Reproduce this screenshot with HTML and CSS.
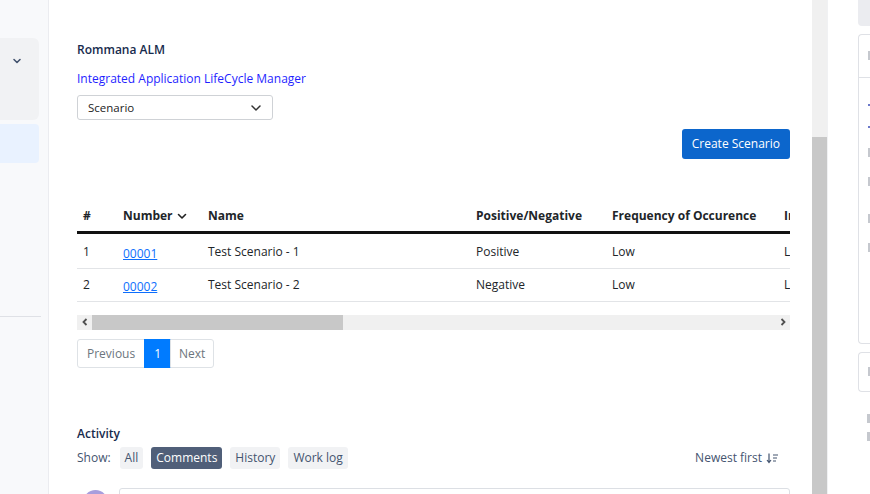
FILE: index.html
```html
<!DOCTYPE html>
<html lang="en">
<head>
    <meta charset="UTF-8">
    <meta name="viewport" content="width=device-width, initial-scale=1.0">
    <title>Rommana ALM - Scenario</title>
    <link rel="stylesheet" href="styles.css">
</head>
<body>
    <div class="app">
        <aside class="sidebar">
            <div class="side-group">
                <svg class="side-chevron" width="10" height="10" viewBox="0 0 10 10"><path d="M2 3.5 L5 6.5 L8 3.5" fill="none" stroke="#44546f" stroke-width="1.6" stroke-linecap="round" stroke-linejoin="round"/></svg>
            </div>
            <div class="side-active"></div>
            <div class="side-divider"></div>
        </aside>

        <main class="main">
            <div class="app-title">Rommana ALM</div>
            <div class="app-subtitle">Integrated Application LifeCycle Manager</div>

            <div class="select">
                <span>Scenario</span>
                <svg width="12" height="12" viewBox="0 0 12 12"><path d="M2 4 L6 8 L10 4" fill="none" stroke="#333" stroke-width="1.5" stroke-linecap="round" stroke-linejoin="round"/></svg>
            </div>

            <div class="toolbar">
                <div class="create-btn">Create Scenario</div>
            </div>

            <div class="table-wrap">
                <table class="grid">
                    <thead>
                        <tr>
                            <th class="c-idx">#</th>
                            <th class="c-num">Number
                                <svg width="10" height="10" viewBox="0 0 10 10"><path d="M1.5 3.5 L5 7 L8.5 3.5" fill="none" stroke="#222" stroke-width="1.6" stroke-linecap="round" stroke-linejoin="round"/></svg>
                            </th>
                            <th class="c-name">Name</th>
                            <th class="c-pn">Positive/Negative</th>
                            <th class="c-freq">Frequency of Occurence</th>
                            <th class="c-imp">Impact</th>
                        </tr>
                    </thead>
                    <tbody>
                        <tr>
                            <td>1</td>
                            <td><a href="#" class="num-link">00001</a></td>
                            <td>Test Scenario - 1</td>
                            <td>Positive</td>
                            <td>Low</td>
                            <td>Low</td>
                        </tr>
                        <tr>
                            <td>2</td>
                            <td><a href="#" class="num-link">00002</a></td>
                            <td>Test Scenario - 2</td>
                            <td>Negative</td>
                            <td>Low</td>
                            <td>Low</td>
                        </tr>
                    </tbody>
                </table>
            </div>

            <div class="hscroll">
                <div class="hs-arrow">
                    <svg width="8" height="8" viewBox="0 0 8 8"><path d="M5.5 1 L2.5 4 L5.5 7" fill="none" stroke="#505050" stroke-width="1.8"/></svg>
                </div>
                <div class="hs-track"><div class="hs-thumb"></div></div>
                <div class="hs-arrow">
                    <svg width="8" height="8" viewBox="0 0 8 8"><path d="M2.5 1 L5.5 4 L2.5 7" fill="none" stroke="#505050" stroke-width="1.8"/></svg>
                </div>
            </div>

            <div class="pager">
                <div class="page-item">Previous</div>
                <div class="page-item active">1</div>
                <div class="page-item">Next</div>
            </div>

            <div class="activity">
                <div class="activity-title">Activity</div>
                <div class="activity-bar">
                    <div class="show-group">
                        <span class="show-label">Show:</span>
                        <span class="chip">All</span>
                        <span class="chip selected">Comments</span>
                        <span class="chip">History</span>
                        <span class="chip">Work log</span>
                    </div>
                    <div class="sort">Newest first
                        <svg width="13" height="12" viewBox="0 0 13 12"><path d="M3 1.5 V10 M1 8 L3 10.5 L5 8" fill="none" stroke="#44546f" stroke-width="1.2"/><path d="M7 3 H12 M7 6 H11 M7 9 H10" stroke="#44546f" stroke-width="1.2"/></svg>
                    </div>
                </div>
                <div class="comment-row">
                    <div class="avatar"></div>
                    <div class="comment-box"></div>
                </div>
            </div>
        </main>

        <div class="vscroll"><div class="vthumb"></div></div>

        <aside class="rightpanel">
            <div class="rp-top"></div>
            <div class="rp-card big">
                <div class="rp-head"><i class="mark"></i></div>
                <div class="rp-body">
                    <i class="mark blue"></i>
                    <i class="mark blue gap"></i>
                    <i class="mark"></i>
                    <i class="mark gap2"></i>
                    <i class="mark"></i>
                    <i class="mark gap2"></i>
                </div>
            </div>
            <div class="rp-card small"><i class="mark"></i></div>
            <div class="rp-foot">
                <i class="mark"></i>
                <i class="mark"></i>
            </div>
        </aside>
    </div>
</body>
</html>
```

FILE: styles.css
```css
* {
    margin: 0;
    padding: 0;
    box-sizing: border-box;
}

body {
    font-family: "Open Sans", "Noto Sans", "Liberation Sans", sans-serif;
    background-color: #ffffff;
    color: #172b4d;
    width: 870px;
    height: 494px;
    overflow: hidden;
}

.app {
    display: flex;
    height: 494px;
}

/* left nav (collapsed) */
.sidebar {
    width: 49px;
    flex-shrink: 0;
    background-color: #f8f9fb;
    border-right: 1px solid #ebecf0;
    padding-top: 38px;
}

.side-group {
    width: 39px;
    height: 82px;
    background-color: #f1f2f4;
    border-radius: 0 6px 6px 0;
    padding: 18px 0 0 12px;
}

.side-chevron {
    display: block;
}

.side-active {
    width: 39px;
    height: 39px;
    margin-top: 4px;
    background-color: #e9f2ff;
    border-radius: 0 4px 4px 0;
}

.side-divider {
    width: 41px;
    margin-top: 153px;
    border-top: 1px solid #dfe1e6;
}

/* main */
.main {
    width: 763px;
    flex-shrink: 0;
    padding: 41px 22px 0 28px;
    overflow: hidden;
}

.app-title {
    font-size: 12px;
    font-weight: 600;
    line-height: 17px;
    color: #172b4d;
}

.app-subtitle {
    font-size: 12px;
    line-height: 17px;
    color: #1f1fff;
    margin-top: 12px;
}

.select {
    width: 196px;
    height: 25px;
    margin-top: 8px;
    border: 1px solid #cfd2d6;
    border-radius: 3px;
    display: flex;
    align-items: center;
    justify-content: space-between;
    padding: 0 10px;
    font-size: 11.5px;
    color: #222;
}

.select svg {
    display: block;
}

.toolbar {
    display: flex;
    justify-content: flex-end;
    margin-top: 9px;
}

.create-btn {
    background-color: #0c66cc;
    color: #ffffff;
    font-size: 12px;
    height: 30px;
    line-height: 30px;
    padding: 0 10px;
    border-radius: 3px;
}

.table-wrap {
    margin-top: 43px;
    overflow: hidden;
}

.grid {
    border-collapse: collapse;
    width: 1200px;
    font-size: 12px;
    color: #212529;
    text-align: left;
}

.grid th {
    font-weight: 700;
    height: 30px;
    padding: 0 6px 1px;
    border-bottom: 3px solid #111;
    white-space: nowrap;
    color: #212529;
}

.grid th svg {
    vertical-align: -1px;
    margin-left: 1px;
}

.grid td {
    height: 33px;
    padding: 0 6px;
    border-bottom: 1px solid #e2e4e7;
    white-space: nowrap;
}

.grid tbody tr:first-child td {
    height: 36px;
    padding-top: 1px;
}

.c-idx { width: 40px; }
.c-num { width: 85px; }
.c-name { width: 268px; }
.c-pn { width: 136px; }
.c-freq { width: 172px; }

.num-link {
    color: #0d6efd;
    text-decoration: underline;
    position: relative;
    top: 2px;
}

/* fake horizontal scrollbar */
.hscroll {
    display: flex;
    height: 15px;
    margin-top: 13px;
    background-color: #f0f0f0;
}

.hs-arrow {
    width: 15px;
    display: flex;
    align-items: center;
    justify-content: center;
}

.hs-track {
    flex: 1;
}

.hs-thumb {
    width: 251px;
    height: 15px;
    background-color: #c8c8c8;
}

/* pagination */
.pager {
    display: flex;
    margin-top: 9px;
}

.page-item {
    height: 29px;
    line-height: 27px;
    padding: 0 8px;
    font-size: 12px;
    color: #6c757d;
    border: 1px solid #dee2e6;
    margin-left: -1px;
}

.page-item:first-child {
    margin-left: 0;
    padding: 0 9px;
    border-radius: 3px 0 0 3px;
}

.page-item:last-child {
    border-radius: 0 3px 3px 0;
}

.page-item.active {
    background-color: #007bff;
    border-color: #007bff;
    color: #ffffff;
    padding: 0 9px;
}

/* activity */
.activity {
    margin-top: 57px;
}

.activity-title {
    font-size: 12px;
    font-weight: 600;
    color: #172b4d;
    line-height: 17px;
}

.activity-bar {
    display: flex;
    justify-content: space-between;
    align-items: center;
    margin-top: 5px;
}

.show-group {
    display: flex;
    align-items: center;
    gap: 8px;
    font-size: 12px;
    color: #44546f;
}

.show-label {
    margin-right: 1px;
}

.chip {
    background-color: #f1f2f4;
    height: 22px;
    line-height: 22px;
    padding: 0 5px;
    border-radius: 3px;
}

.chip:first-of-type {
    padding: 0 6px;
}

.chip.selected {
    background-color: #505f79;
    color: #ffffff;
}

.sort {
    font-size: 12px;
    color: #44546f;
    display: flex;
    align-items: center;
    gap: 4px;
    margin-right: 11px;
}

.comment-row {
    display: flex;
    align-items: flex-start;
    gap: 11px;
    margin-top: 19px;
    padding-left: 6px;
}

.avatar {
    width: 25px;
    height: 25px;
    border-radius: 50%;
    background-color: #6e5dc6;
    margin-top: 2px;
    opacity: 0.6;
}

.comment-box {
    flex: 1;
    height: 40px;
    border: 1px solid #dcdfe4;
    border-radius: 3px;
}

/* fake vertical scrollbar of main */
.vscroll {
    width: 15px;
    flex-shrink: 0;
    background-color: #f0f0f0;
    padding-top: 137px;
}

.vthumb {
    height: 357px;
    background-color: #c8c8c8;
}

/* right detail panel, mostly cut off */
.rightpanel {
    flex: 1;
    padding: 0 0 0 30px;
    border-left: 1px solid #f0f1f3;
}

.rp-top {
    height: 26px;
    background-color: #ebecf0;
    border-radius: 0 0 0 4px;
}

.rp-card {
    border: 1px solid #dfe1e6;
    border-right: none;
    border-radius: 4px 0 0 4px;
    margin-top: 8px;
}

.rp-card.big {
    height: 310px;
}

.rp-head {
    height: 43px;
    border-bottom: 1px solid #dfe1e6;
    padding: 16px 0 0 9px;
}

.rp-body {
    padding: 26px 0 0 9px;
    display: flex;
    flex-direction: column;
    gap: 20px;
}

.rp-card.small {
    height: 40px;
    padding: 14px 0 0 9px;
}

.mark {
    display: block;
    width: 3px;
    height: 9px;
    background-color: #c5c8ce;
}

.mark.blue {
    height: 2px;
    background-color: #6b78c9;
}

.mark.gap2 {
    margin-bottom: 8px;
}

.rp-foot {
    padding: 22px 0 0 9px;
    display: flex;
    flex-direction: column;
    gap: 9px;
}
```
